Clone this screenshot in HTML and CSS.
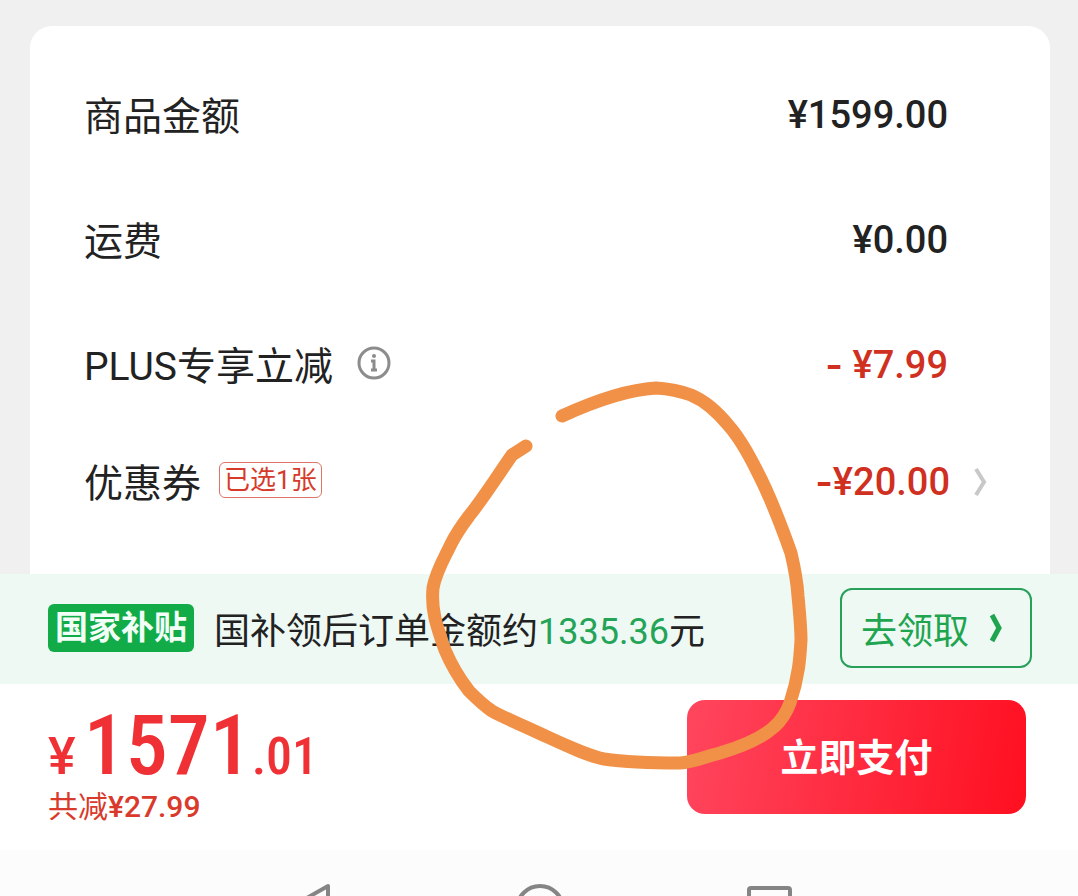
FILE: index.html
```html
<!DOCTYPE html>
<html lang="zh-CN">
<head>
  <meta charset="UTF-8">
  <meta name="viewport" content="width=device-width, initial-scale=1">
  <title>确认订单</title>
  <link rel="stylesheet" href="styles.css">
</head>
<body>

  <main class="content">
    <dl class="card">
      <div class="row">
        <dt>商品金额</dt>
        <dd>¥1599.00</dd>
      </div>
      <div class="row">
        <dt>运费</dt>
        <dd>¥0.00</dd>
      </div>
      <div class="row">
        <dt>
          PLUS专享立减
          <button type="button" class="info" aria-label="说明">
            <svg width="34" height="34" viewBox="0 0 34 34" fill="none" stroke="#8c8c8c">
              <circle cx="17" cy="17" r="15" stroke-width="3"/>
              <circle cx="17" cy="10" r="2" fill="#8c8c8c" stroke="none"/>
              <path d="M14 15h3v9M14 24h6" stroke-width="3"/>
            </svg>
          </button>
        </dt>
        <dd class="minus"><span class="dash">-</span>&nbsp;¥7.99</dd>
      </div>
      <div class="row coupon">
        <dt>优惠券 <span class="tag">已选1张</span></dt>
        <dd class="minus">
          <span class="dash">-</span>¥20.00
          <button type="button" class="more" aria-label="选择优惠券">
            <svg width="16" height="32" viewBox="0 0 16 32" fill="none" stroke="#c8c8c8" stroke-width="4">
              <path d="M4 3l8 13-8 13"/>
            </svg>
          </button>
        </dd>
      </div>
    </dl>
  </main>

  <section class="subsidy">
    <span class="badge">国家补贴</span>
    <p class="subsidy-text">国补领后订单金额约<span class="green">1335.36</span>元</p>
    <button type="button" class="claim">
      去领取
      <svg width="14" height="32" viewBox="0 0 14 32" fill="none" stroke="#1fa450" stroke-width="5">
        <path d="M3 3l7 13-7 13"/>
      </svg>
    </button>
  </section>

  <footer class="pay-bar">
    <div class="total">
      <p class="price"><span class="yen">¥</span><span class="big">1571</span>.01</p>
      <p class="saved">共减<span class="saved-num">¥27.99</span></p>
    </div>
    <button type="button" class="pay">立即支付</button>
  </footer>

  <nav class="sys-nav">
    <button type="button" aria-label="返回">
      <svg width="48" height="48" viewBox="0 0 48 48" fill="none" stroke="#858585" stroke-width="4" stroke-linejoin="round">
        <path d="M43 4v42L6 25z"/>
      </svg>
    </button>
    <button type="button" aria-label="主页">
      <svg width="48" height="48" viewBox="0 0 48 48" fill="none" stroke="#858585" stroke-width="4">
        <circle cx="25" cy="27" r="23"/>
      </svg>
    </button>
    <button type="button" aria-label="最近任务">
      <svg width="48" height="48" viewBox="0 0 48 48" fill="none" stroke="#858585" stroke-width="4" stroke-linejoin="round">
        <rect x="4" y="6" width="41" height="40" rx="2"/>
      </svg>
    </button>
  </nav>

  <!-- hand-drawn circle -->
  <svg class="mark" width="390" height="400" viewBox="420 375 390 400" fill="none" stroke="#f19147" stroke-width="13" stroke-linecap="round" stroke-linejoin="round">
    <path d="M562 416C586 405 622 390 656 388C672 389 683 392 691 395C703 400 716 410 729 426C737 435 748 453 757 471C769 494 780 522 791 553C795 570 797 580 798 596C800 617 801 629 801 640C800 657 799 676 790 703C787 711 781 721 774 727C764 736 747 745 720 753C701 758 693 762 680 763C655 763 625 762 604 759C588 756 565 745 541 734C520 724 502 717 492 711C483 705 476 698 469 691C459 678 450 662 445 650C436 624 431 610 433 588C436 571 445 557 451 544C456 534 463 524 469 516C482 500 494 481 512 455L526 446"/>
  </svg>

</body>
</html>
```

FILE: styles.css
```css
* {
  box-sizing: border-box;
}

body {
  display: flex;
  flex-direction: column;
  position: relative;
  min-height: 100vh;
  margin: 0;
  background: #f0f0f0;
  color: #222;
  font-family: Roboto, "Noto Sans CJK SC", sans-serif;
}

p, dl, dd {
  margin: 0;
}

button {
  padding: 0;
  border: 0;
  background: none;
  font-family: inherit;
  cursor: pointer;
}

svg {
  display: block;
}

.content {
  display: flex;
  flex: 1;
  padding: 26px 28px 0 30px;
}

.card {
  flex: 1;
  padding: 26px 102px 0 54px;
  border-radius: 22px 22px 0 0;
  background: #fff;
}

.row {
  display: flex;
  align-items: center;
  justify-content: space-between;
  height: 125px;
}

.row dt, .row dd {
  display: flex;
  align-items: center;
  font-size: 39px;
}

.row dt {
  padding-bottom: 4px;
}

.row dd {
  font-size: 38px;
  font-weight: 500;
}

.row .minus {
  color: #d0301f;
}

.dash {
  font-family: Inter, sans-serif;
  font-weight: 600;
}

.info {
  margin-left: 24px;
}

.coupon {
  height: 110px;
  margin-right: -40px;
}

.tag {
  margin-left: 18px;
  padding: 0 4px;
  border: 1px solid #dd7466;
  border-radius: 6px;
  color: #d63a2a;
  font-size: 26px;
  line-height: 34px;
}

.more {
  margin-left: 22px;
}

.subsidy {
  display: flex;
  align-items: center;
  height: 110px;
  padding: 0 46px 2px 48px;
  background: #eef9f4;
}

.badge {
  padding: 0 7px;
  border-radius: 6px;
  background: #11ab48;
  color: #f2fff6;
  font-size: 33px;
  font-weight: 700;
  line-height: 48px;
}

.subsidy-text {
  flex: 1;
  margin-left: 20px;
  font-size: 36px;
}

.green {
  color: #24a457;
}

.claim {
  display: flex;
  align-items: center;
  justify-content: center;
  gap: 20px;
  width: 192px;
  height: 80px;
  padding-right: 8px;
  border: 2px solid #28a05a;
  border-radius: 12px;
  color: #1fa450;
  font-size: 36px;
}

.pay-bar {
  display: flex;
  align-items: flex-start;
  justify-content: space-between;
  height: 166px;
  padding: 16px 52px 0 48px;
  background: #fff;
}

.price {
  padding-top: 8px;
  color: #ef3035;
  font-family: "Roboto Condensed", Roboto, sans-serif;
  font-size: 52px;
  font-weight: 500;
  line-height: 76px;
}

.yen {
  margin-right: 8px;
  font-family: Roboto, sans-serif;
}

.big {
  font-size: 84px;
}

.saved {
  color: #d93a2b;
  font-size: 30px;
  line-height: 24px;
}

.saved-num {
  font-weight: 500;
}

.pay {
  width: 339px;
  height: 114px;
  padding-bottom: 6px;
  border-radius: 18px;
  background: linear-gradient(100deg, #ff465e, #ff0f20);
  color: #fff;
  font-size: 38px;
  font-weight: 700;
}

.sys-nav {
  display: flex;
  justify-content: center;
  gap: 182px;
  height: 46px;
  padding-top: 32px;
  overflow: hidden;
  background: #fcfcfc;
}

.sys-nav button {
  height: 48px;
}

.mark {
  position: absolute;
  top: 375px;
  left: 420px;
  pointer-events: none;
}
```
